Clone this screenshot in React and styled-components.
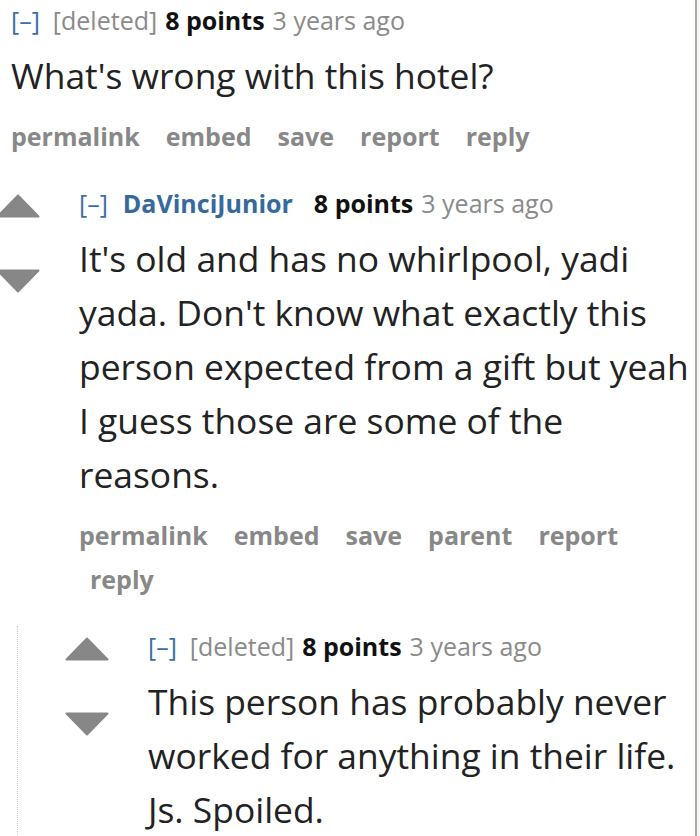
import React from "react";
import styled, { createGlobalStyle } from "styled-components";

const GlobalStyle = createGlobalStyle`
  html, body {
    margin: 0;
    padding: 0;
    background: #f7f7f5;
  }
  body {
    font-family: "Open Sans", "Noto Sans", sans-serif;
    overflow: hidden;
  }
`;

const Page = styled.div`
  width: 695px;
  min-height: 836px;
  background: #ffffff;
  border-right: 2px solid #a9a9a9;
  overflow: hidden;
  display: flex;
  flex-direction: column;
`;

const Thing = styled.div`
  display: flex;
  flex-direction: column;
  margin-top: ${(p) => (p.$first ? "0" : "25px")};
`;

const Row = styled.div`
  display: flex;
  align-items: flex-start;
`;

const Votes = styled.div`
  flex: 0 0 83px;
  margin-left: -4px;
  padding-top: 11px;
  display: flex;
  flex-direction: column;
  gap: 51px;
`;

const Arrow = styled.svg`
  display: block;
  width: 44px;
  height: 24px;
  fill: #878787;
  stroke: #878787;
  stroke-width: 2;
  stroke-linejoin: round;
`;

const Entry = styled.div`
  flex: 1 1 auto;
  min-width: 0;
  padding-left: ${(p) => p.$indent || 0}px;
`;

const Tagline = styled.div`
  display: flex;
  align-items: baseline;
  gap: 8px;
  font-size: 25px;
  line-height: 40px;
  color: #8a8a8a;
  white-space: nowrap;
`;

const Expand = styled.span`
  color: #3b6fa6;
  margin-right: ${(p) => (p.$wide ? 7 : 5)}px;
`;

const Author = styled.span`
  color: ${(p) => (p.$deleted ? "#8a8a8a" : "#36699c")};
  font-weight: ${(p) => (p.$deleted ? 400 : 700)};
  margin-right: ${(p) => (p.$deleted ? 0 : 13)}px;
`;

const Score = styled.span`
  color: #111111;
  font-weight: 700;
`;

const Time = styled.span`
  color: #8a8a8a;
`;

const Body = styled.div`
  margin-top: 8px;
  font-size: 35.4px;
  line-height: 54px;
  color: #222222;
`;

const Actions = styled.ul`
  list-style: none;
  margin: 12px 0 0;
  padding: 0 0 0 11px;
  text-indent: -11px;
  font-size: 25px;
  line-height: 44px;
  font-weight: 700;
  color: #888888;
`;

const Action = styled.li`
  display: inline-block;
  text-indent: 0;
  margin-right: 26px;
  white-space: nowrap;
`;

const Child = styled.div`
  margin-top: 25px;
  margin-left: 17px;
  padding-left: 51px;
  border-left: 1px dotted #c9c9f0;
`;

const UpArrow = () => (
  <Arrow viewBox="0 0 44 24" aria-hidden="true">
    <polygon points="22,1.5 42.5,22.5 1.5,22.5" />
  </Arrow>
);

const DownArrow = () => (
  <Arrow viewBox="0 0 44 24" aria-hidden="true">
    <polygon points="1.5,1.5 42.5,1.5 22,22.5" />
  </Arrow>
);

function Comment({ author, deleted, body, actions, first, votes, indent, children }) {
  const entry = (
    <Entry $indent={indent}>
      <Tagline>
        <Expand $wide={!deleted}>[–]</Expand>
        <Author $deleted={deleted}>{author}</Author>
        <Score>8 points</Score>
        <Time>3 years ago</Time>
      </Tagline>
      <Body>{body}</Body>
      {actions && (
        <Actions>
          {actions.map((a) => (
            <Action key={a}>{a}</Action>
          ))}
        </Actions>
      )}
    </Entry>
  );
  return (
    <Thing $first={first}>
      {votes ? (
        <Row>
          <Votes>
            <UpArrow />
            <DownArrow />
          </Votes>
          {entry}
        </Row>
      ) : (
        entry
      )}
      {children && <Child>{children}</Child>}
    </Thing>
  );
}

export default function App() {
  return (
    <>
      <GlobalStyle />
      <Page>
        <Comment
          first
          indent={11}
          deleted
          author="[deleted]"
          body="What's wrong with this hotel?"
          actions={["permalink", "embed", "save", "report", "reply"]}
        />
        <Comment
          votes
          author="DaVinciJunior"
          body="It's old and has no whirlpool, yadi yada. Don't know what exactly this person expected from a gift but yeah I guess those are some of the reasons."
          actions={["permalink", "embed", "save", "parent", "report", "reply"]}
        >
          <Comment
            first
            votes
            deleted
            author="[deleted]"
            body="This person has probably never worked for anything in their life. Js. Spoiled."
          />
        </Comment>
      </Page>
    </>
  );
}
